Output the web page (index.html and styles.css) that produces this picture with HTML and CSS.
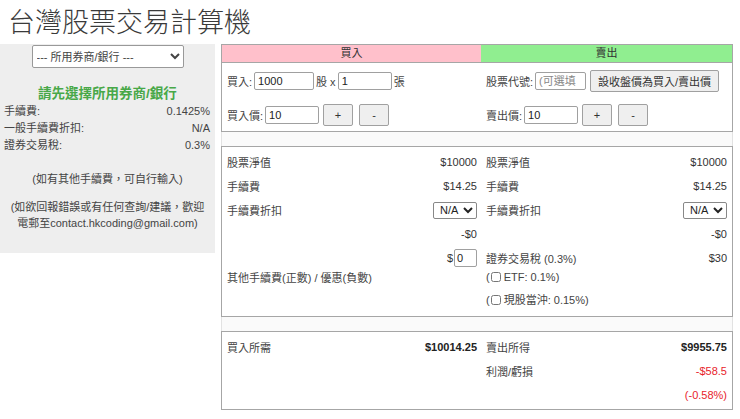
FILE: index.html
```html
<!DOCTYPE html>
<html lang="zh-Hant">
<head>
    <meta charset="UTF-8">
    <meta name="viewport" content="width=device-width, initial-scale=1.0">
    <title>台灣股票交易計算機</title>
    <link rel="stylesheet" href="styles.css">
</head>

<body>
    <h1 class="title">台灣股票交易計算機</h1>

    <div class="page">
        <!-- broker settings -->
        <div class="sidebar">
            <div class="broker-pick">
                <select class="broker-select">
                    <option>--- 所用券商/銀行 ---</option>
                </select>
            </div>
            <div class="broker-name">請先選擇所用券商/銀行</div>
            <div class="info-row"><span>手續費:</span><span>0.1425%</span></div>
            <div class="info-row"><span>一般手續費折扣:</span><span>N/A</span></div>
            <div class="info-row"><span>證券交易稅:</span><span>0.3%</span></div>
            <p class="note">(如有其他手續費，可自行輸入)</p>
            <p class="note contact">(如欲回報錯誤或有任何查詢/建議，歡迎<br>電郵至contact.hkcoding@gmail.com)</p>
        </div>

        <!-- calculator -->
        <div class="calc">
            <div class="box">
                <div class="head buy">買入</div>
                <div class="head sell">賣出</div>

                <div class="cell row-qty">
                    買入: <input class="num w60" type="text" value="1000"> 股 x <input class="num w54" type="text" value="1"> 張
                </div>
                <div class="cell row-qty">
                    股票代號: <input class="num w51" type="text" placeholder="(可選填"> <button class="btn wide">設收盤價為買入/賣出價</button>
                </div>

                <div class="cell row-price">
                    買入價: <input class="num w54" type="text" value="10"> <button class="btn">+</button> <button class="btn">-</button>
                </div>
                <div class="cell row-price">
                    賣出價: <input class="num w54" type="text" value="10"> <button class="btn">+</button> <button class="btn">-</button>
                </div>
            </div>

            <div class="spacer"></div>

            <div class="box detail">
                <div class="col">
                    <div class="line"><span>股票淨值</span><span class="val">$10000</span></div>
                    <div class="line"><span>手續費</span><span class="val">$14.25</span></div>
                    <div class="line"><span>手續費折扣</span><select class="disc"><option>N/A</option></select></div>
                    <div class="line"><span></span><span class="val">-$0</span></div>
                    <div class="line"><span></span><span class="val">$<input class="num other" type="text" value="0"></span></div>
                    <div class="sub">其他手續費(正數) / 優惠(負數)</div>
                </div>
                <div class="col">
                    <div class="line"><span>股票淨值</span><span class="val">$10000</span></div>
                    <div class="line"><span>手續費</span><span class="val">$14.25</span></div>
                    <div class="line"><span>手續費折扣</span><select class="disc"><option>N/A</option></select></div>
                    <div class="line"><span></span><span class="val">-$0</span></div>
                    <div class="line"><span>證券交易稅 (0.3%)</span><span class="val">$30</span></div>
                    <label class="opt etf">(<input type="checkbox"> ETF: 0.1%)</label>
                    <label class="opt daytrade">(<input type="checkbox"> 現股當沖: 0.15%)</label>
                </div>
            </div>

            <div class="spacer"></div>

            <div class="box total">
                <div class="col">
                    <div class="line"><span>買入所需</span><span class="val strong">$10014.25</span></div>
                </div>
                <div class="col">
                    <div class="line"><span>賣出所得</span><span class="val strong">$9955.75</span></div>
                    <div class="line"><span>利潤/虧損</span><span class="val loss">-$58.5</span></div>
                    <div class="line"><span></span><span class="val loss">(-0.58%)</span></div>
                </div>
            </div>
        </div>
    </div>
</body>

</html>
```

FILE: styles.css
```css
body {
    margin: 0;
    font-family: 'Liberation Sans', 'Noto Sans CJK TC', sans-serif;
    font-size: 11px;
    color: #444;
    background-color: #fff;
}

.title {
    margin: 0;
    padding: 4px 0 0 8px;
    height: 40px;
    font-family: 'Noto Sans CJK TC', sans-serif;
    font-size: 27px;
    font-weight: 300;
    line-height: 34px;
    color: #3a3a3a;
}

.page {
    display: flex;
    align-items: flex-start;
}

/* left panel */
.sidebar {
    width: 211px;
    height: 208px;
    padding: 1px 2px 0 2px;
    background-color: #eee;
}

.broker-pick {
    display: flex;
    justify-content: center;
}

.broker-select {
    width: 152px;
    height: 23px;
    font-family: inherit;
    font-size: 11px;
    color: #444;
    background-color: #fff;
    border: 1px solid #999;
    border-radius: 2px;
}

.broker-name {
    margin-top: 17px;
    text-align: center;
    font-size: 13.5px;
    font-weight: bold;
    color: #48a848;
    line-height: 18px;
}

.info-row {
    display: flex;
    justify-content: space-between;
    line-height: 17px;
    padding: 0 3px 0 2px;
}

.info-row:first-of-type {
    margin-top: 4px;
}

.note {
    margin: 17px 0 0 0;
    text-align: center;
    line-height: 16px;
}

.note.contact {
    margin-top: 12px;
}

/* calculator */
.calc {
    width: 512px;
    margin-left: 6px;
}

.box {
    display: grid;
    grid-template-columns: 259px 1fr;
    border: 1px solid #a6a6a6;
}

.spacer {
    height: 14px;
    border-left: 1px solid #e2e2e2;
    border-right: 1px solid #e2e2e2;
    background-color: #fafafa;
}

.head {
    height: 17px;
    line-height: 17px;
    text-align: center;
    color: #333;
    border-bottom: 1px solid #a6a6a6;
}

.head.buy {
    background-color: #ffc0cb;
}

.head.sell {
    background-color: #90ee90;
}

.cell {
    display: flex;
    align-items: center;
    gap: 2px;
    padding: 0 5px;
    white-space: nowrap;
}

.row-qty {
    height: 35px;
}

.row-price {
    height: 33px;
}

.num {
    box-sizing: border-box;
    height: 18px;
    padding: 0 3px;
    font-family: inherit;
    font-size: 11px;
    color: #222;
    border: 1px solid #a0a0a0;
    border-radius: 2px;
}

.num::placeholder {
    color: #888;
}

.w60 { width: 60px; }
.w54 { width: 54px; }
.w51 { width: 51px; }

.btn {
    box-sizing: border-box;
    width: 30px;
    height: 22px;
    margin-left: 2px;
    font-family: inherit;
    font-size: 11px;
    color: #333;
    background-color: #efefef;
    border: 1px solid #a0a0a0;
    border-radius: 2px;
}

.btn + .btn {
    margin-left: 4px;
}

.btn.wide {
    width: 129px;
    margin-left: 2px;
}

.detail {
    padding: 3px 0 8px 0;
}

.col {
    display: flex;
    flex-direction: column;
    padding: 0 5px 0 5px;
}

.col + .col {
    padding-right: 5px;
}

.col:first-child {
    padding-right: 4px;
}

.line {
    display: flex;
    justify-content: space-between;
    align-items: center;
    height: 24px;
}

.val {
    display: flex;
    align-items: center;
    color: #333;
}

.disc {
    width: 44px;
    height: 17px;
    font-family: inherit;
    font-size: 11px;
    color: #222;
    background-color: #fff;
    border: 1px solid #888;
    border-radius: 2px;
    padding: 0 0 0 2px;
}

.other {
    width: 23px;
    margin-left: 1px;
    padding: 0 2px;
}

.sub {
    line-height: 16px;
    margin-top: 0;
}

.opt {
    display: flex;
    align-items: center;
    height: 14px;
    line-height: 14px;
}

.opt input {
    width: 10px;
    height: 10px;
    margin: 0 3px 0 1px;
}

.daytrade {
    margin-top: 8px;
    height: 16px;
}

.total {
    padding: 3px 0 2px 0;
}

.strong {
    font-weight: bold;
    color: #222;
}

.loss {
    color: #e8232b;
}
```
